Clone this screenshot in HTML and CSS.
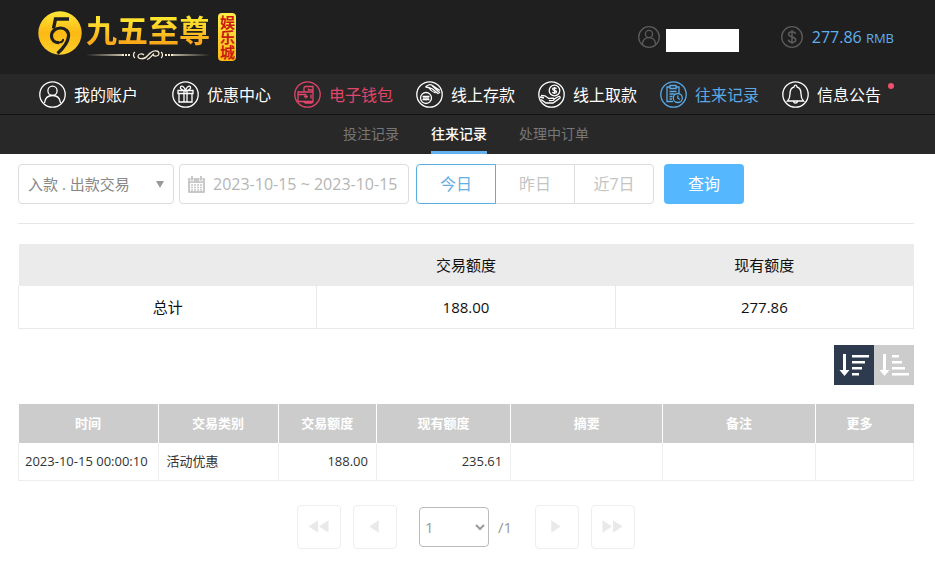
FILE: index.html
```html
<!DOCTYPE html>
<html lang="zh-CN">
<head>
<meta charset="utf-8">
<meta name="viewport" content="width=device-width, initial-scale=1">
<title>往来记录</title>
<link rel="stylesheet" href="styles.css">
</head>
<body>
<header class="top">
  <a class="logo" href="#">
    <svg class="logo-mark" viewBox="0 0 44 44" aria-hidden="true">
      <defs>
        <linearGradient id="gold" x1="0" y1="0" x2="0" y2="1">
          <stop offset="0" stop-color="#ffe838"/><stop offset=".5" stop-color="#fdb913"/><stop offset="1" stop-color="#fccf2c"/>
        </linearGradient>
      </defs>
      <circle cx="22" cy="22" r="21.700" fill="url(#gold)"/>
      <path d="M31 8H17.500l-2 9.500" fill="none" stroke="#1f1f1f" stroke-width="3.400"/>
      <path d="M21 31.500c-4.500.5-7.500-2.500-7.500-6.500 0-4.500 4-8 9-8s8.500 3.500 8 8.500c-.6 6-5 11.500-11 17" fill="none" stroke="#1f1f1f" stroke-width="3.200"/>
      <path d="M20.500 31.500c3 .3 5-1.500 4.500-3.500" fill="none" stroke="#1f1f1f" stroke-width="2"/>
    </svg>
    <span class="logo-words">
      <span class="logo-name">九五至尊</span>
      <svg class="logo-rule" viewBox="0 0 124 12" aria-hidden="true" fill="none" stroke="#f5ecd0">
        <path d="M0 6l36-.8v1.600zM124 6l-38-.8v1.600z" fill="#f5ecd0" stroke="none"/>
        <path d="M36 6h9M79 6h9" stroke-width="2" stroke-dasharray="2 1"/>
        <path d="M49 3c-2 1-2 5 0 6M75 3c2 1 2 5 0 6" stroke-width="1.300"/>
        <path d="M58 6c-2-2-6-1-6 1.200C52 10 57 10.500 60 8l5-4.500c3-2.500 8-2 8 1.200 0 2.300-4 3.300-6 1.300M56 10c4 0 5-3 8-6M61 10.500c3-.5 4-3.500 7-6" stroke-width="1.200"/>
      </svg>
    </span>
    <span class="logo-badge">娱乐城</span>
  </a>
  <div class="account">
    <svg class="round" viewBox="0 0 22 22" aria-hidden="true" fill="none" stroke="#5c5c5c" stroke-width="1.300">
      <circle cx="11" cy="11" r="10.300"/><circle cx="11" cy="8" r="3.600"/><path d="M4.500 18c.3-4 2.800-6.300 6.500-6.300s6.200 2.300 6.500 6.300"/>
    </svg>
    <span class="user-name"></span>
  </div>
  <div class="balance">
    <svg class="round" viewBox="0 0 22 22" aria-hidden="true" fill="none" stroke="#5c5c5c" stroke-width="1.300">
      <circle cx="11" cy="11" r="10.300"/><path d="M14.500 8c-.4-1.600-1.700-2.300-3.500-2.300-2 0-3.400.9-3.400 2.500 0 3.700 7.100 1.700 7.100 5.500 0 1.700-1.600 2.600-3.600 2.600-2.100 0-3.500-.9-3.700-2.600M11 4v14" stroke-width="1.500"/>
    </svg>
    <span class="amount">277.86 <small>RMB</small></span>
  </div>
</header>

<nav class="main-nav">
  <a class="nav-item first" href="#">
    <svg viewBox="0 0 27 27" aria-hidden="true"><circle cx="13.500" cy="13.500" r="12.700"/><circle cx="13.500" cy="9.800" r="4.600"/><path d="M5.500 22c.5-5 3.500-7.500 8-7.500s7.500 2.500 8 7.500"/></svg>
    <span>我的账户</span></a>
  <a class="nav-item" href="#">
    <svg viewBox="0 0 27 27" aria-hidden="true"><circle cx="13.500" cy="13.500" r="12.700"/><path d="M6 9.500h15v3H6zM7 12.500h13v8.500H7zM12 9.500V21M15 9.500V21M13.500 9.500C11 9.500 7.500 8 8.500 6c1.500-2 4 0 5 3.500C14.500 6 17 4 18.500 6c1 2-2.500 3.500-5 3.500z"/></svg>
    <span>优惠中心</span></a>
  <a class="nav-item wallet" href="#">
    <svg viewBox="0 0 27 27" aria-hidden="true"><circle cx="13.500" cy="13.500" r="12.700"/><path d="M10 11V7q0-1.500 1.500-1.500H19v15q0 1.500-1.500 1.500h-6q-1.500 0-1.500-1.500M4 11h15v9.500H4zM4 13.500h8M19 9h-4.500V7.500M12 13.500v4M10 15.500h4M17 13.500v4"/></svg>
    <span>电子钱包</span></a>
  <a class="nav-item" href="#">
    <svg viewBox="0 0 27 27" aria-hidden="true"><circle cx="13.500" cy="13.500" r="12.700"/><circle cx="10" cy="17" r="5.500"/><path d="M6.500 15.500h7M6.500 18.500h7M8 15.500v3M10 15v4.500M12 15.500v3M9.500 6c2-2 5-3 7-1.500l7.500 5M9.500 6l3 .5 4 1.500 6 5M12.500 6.500c2 3 4 4.500 7 5.500M16 4.500l8 7.500"/></svg>
    <span>线上存款</span></a>
  <a class="nav-item" href="#">
    <svg viewBox="0 0 27 27" aria-hidden="true"><circle cx="13.500" cy="13.500" r="12.700"/><circle cx="16.500" cy="9.500" r="5.300"/><path d="M18.500 7.800c-.6-1.200-3.900-1.200-3.900.3 0 1.800 4 1 4 2.800 0 1.600-3.500 1.500-4.200.2M16.500 6v7M3 14.500l4 .3 4 2.700 4-.3c1.500.2 1.500 2-.1 2.200l-4 .2M3 18.500l5 3.500h7l7-5c.7-1.500-.8-2-2-1.200l-4.500 2.700M2 16l4 1"/></svg>
    <span>线上取款</span></a>
  <a class="nav-item current" href="#">
    <svg viewBox="0 0 27 27" aria-hidden="true"><circle cx="13.500" cy="13.500" r="12.700"/><path d="M13 20.500H7V6h3M16 6h3v6M10 4.500h6v3h-6zM9.500 10.500h7M9.500 13h5M9.500 15.500h3M9.500 18h2.500"/><circle cx="17.800" cy="17" r="4.500"/><path d="M17.800 14.500V17l2 1.500"/></svg>
    <span>往来记录</span></a>
  <a class="nav-item notice" href="#">
    <svg viewBox="0 0 27 27" aria-hidden="true"><circle cx="13.500" cy="13.500" r="12.700"/><path d="M5.500 20c2-2 2.500-4 2.500-7 0-4 2-6.500 4-7 .3-2.500 2.700-2.500 3 0 2 .5 4 3 4 7 0 3 .5 5 2.500 7zM11.500 20c.2 2.700 3.800 2.700 4 0"/></svg>
    <span>信息公告</span></a>
</nav>

<nav class="sub-nav">
  <a href="#">投注记录</a>
  <a class="active" href="#">往来记录</a>
  <a href="#">处理中订单</a>
</nav>

<main class="content">
  <form class="filters">
    <div class="type-field">
      <select class="type-select" aria-label="交易类型"><option>入款 . 出款交易</option></select>
      <svg class="type-arrow" viewBox="0 0 8 7" aria-hidden="true"><path d="M0 0h8L4 7z" fill="#999"/></svg>
    </div>
    <label class="date-field">
      <svg viewBox="0 0 17 17" aria-hidden="true"><path d="M1 2h2V0h2v2h7V0h2v2h2q1 0 1 1v13q0 1-1 1H1q-1 0-1-1V3q0-1 1-1z" fill="#c8c8c8"/><path d="M2 7h13v8H2z" fill="#fff"/><path d="M3 9h11M3 11.500h11M3 14h11" stroke="#c8c8c8" stroke-width="1.500" stroke-dasharray="2 1"/><path d="M2.500 2.500V5h3V2.500M11.500 2.500V5h3V2.500" fill="none" stroke="#fff" stroke-width=".7"/></svg>
      <input type="text" value="2023-10-15 ~ 2023-10-15" aria-label="日期范围">
    </label>
    <div class="quick">
      <button type="button" class="selected">今日</button>
      <button type="button">昨日</button>
      <button type="button">近7日</button>
    </div>
    <button type="button" class="query">查询</button>
  </form>

  <table class="summary">
    <thead><tr><th></th><th>交易额度</th><th>现有额度</th></tr></thead>
    <tbody><tr><td>总计</td><td>188.00</td><td>277.86</td></tr></tbody>
  </table>

  <div class="sort">
    <button type="button" class="on" aria-label="降序">
      <svg viewBox="0 0 40 40" aria-hidden="true"><path d="M9 9h3v16h3.500l-5 6-5-6H9zM18 10h17v2.500H18zM18 16h13v2.500H18zM18 22h10v2.500H18zM18 28h7v2.500h-7z" fill="#fff"/></svg>
    </button>
    <button type="button" aria-label="升序">
      <svg viewBox="0 0 40 40" aria-hidden="true"><path d="M9 9h3v16h3.500l-5 6-5-6H9zM18 10h7v2.500h-7zM18 16h10v2.500H18zM18 22h13v2.500H18zM18 28h17v2.500H18z" fill="#fff"/></svg>
    </button>
  </div>

  <table class="records">
    <colgroup><col class="c-time"><col class="c-type"><col class="c-amount"><col class="c-balance"><col class="c-note"><col class="c-note"><col class="c-more"></colgroup>
    <thead><tr><th>时间</th><th>交易类别</th><th>交易额度</th><th>现有额度</th><th>摘要</th><th>备注</th><th class="more">更多</th></tr></thead>
    <tbody><tr><td class="time">2023-10-15 00:00:10</td><td>活动优惠</td><td class="num">188.00</td><td class="num">235.61</td><td></td><td></td><td></td></tr></tbody>
  </table>

  <div class="pager">
    <button type="button" disabled aria-label="首页"><svg viewBox="0 0 44 44" aria-hidden="true"><path d="M21 15v13l-10-6.500zM32 15v13l-10-6.500z"/></svg></button>
    <button type="button" disabled aria-label="上一页"><svg viewBox="0 0 44 44" aria-hidden="true"><path d="M26 15v13l-10-6.500z"/></svg></button>
    <div class="page-pick">
      <select aria-label="页码"><option>1</option></select>
      <span>/1</span>
    </div>
    <button type="button" disabled aria-label="下一页"><svg viewBox="0 0 44 44" aria-hidden="true"><path d="M16 15v13l10-6.500z"/></svg></button>
    <button type="button" disabled aria-label="末页"><svg viewBox="0 0 44 44" aria-hidden="true"><path d="M11 15v13l10-6.500zM22 15v13l10-6.500z"/></svg></button>
  </div>
</main>
</body>
</html>
```
FILE: styles.css
```css
* { box-sizing: border-box; }

body {
  margin: 0;
  background: #fff;
  color: #111;
  font-family: "Open Sans", "Noto Sans CJK SC", sans-serif;
  font-size: 15px;
  line-height: 20px;
}

a { color: inherit; text-decoration: none; }
button, select, input { font: inherit; margin: 0; }
svg { display: block; flex: none; }

.top {
  display: flex;
  align-items: center;
  height: 74px;
  padding: 0 41px 0 38px;
  background: #1f1f1f;
}

.logo { display: flex; align-items: center; margin-right: auto; }
.logo-mark { width: 44px; height: 44px; margin: 0 4px 8px 0; }
.logo-words { display: flex; flex-direction: column; gap: 2px; }
.logo-name {
  font-size: 31px;
  line-height: 34px;
  font-weight: 700;
  background: linear-gradient(#ffe42e 20%, #fba91a 85%);
  background-clip: text;
  -webkit-background-clip: text;
  color: transparent;
}
.logo-rule { width: 124px; height: 12px; }
.logo-badge {
  writing-mode: vertical-rl;
  width: 18px;
  height: 48px;
  margin-left: 8px;
  border-radius: 4px;
  background: linear-gradient(#ffee48, #fdb716);
  color: #c81c10;
  font-size: 15px;
  line-height: 18px;
  font-weight: 700;
  text-align: center;
}

.account, .balance { display: flex; align-items: center; }
.account { gap: 6px; }
.balance { gap: 9px; margin-left: 42px; }
.round { width: 22px; height: 22px; }
.user-name { width: 73px; height: 23px; margin-top: 6px; background: #fff; }
.amount { color: #5fb0ee; font-size: 16px; }
.amount small { font-size: 13px; }

.main-nav {
  display: flex;
  gap: 23px;
  height: 40px;
  padding: 0 39px;
  background: #282828;
  color: #fff;
}
.nav-item { display: flex; align-items: center; gap: 8px; font-size: 16px; white-space: nowrap; }
.nav-item svg { width: 27px; height: 27px; fill: none; stroke: currentColor; stroke-width: 1.3; }
.nav-item span { padding-top: 2px; }
.first { margin-right: 11px; }
.wallet { color: #e0456a; }
.current { color: #58a9e6; }
.notice { position: relative; }
.notice::after {
  content: "";
  position: absolute;
  top: 9px;
  right: -13px;
  width: 6px;
  height: 6px;
  border-radius: 50%;
  background: #f0506e;
}

.sub-nav {
  display: flex;
  justify-content: center;
  gap: 32px;
  height: 40px;
  padding: 0 21px 0 18px;
  border-top: 1px solid #111;
  background: #282828;
  color: #777;
  font-size: 14px;
  line-height: 38px;
}
.sub-nav .active { color: #fff; font-weight: 500; border-bottom: 3px solid #62b0ee; }

.content { padding: 10px 21px 0 18px; }

.filters {
  display: flex;
  height: 60px;
  padding-bottom: 19px;
  border-bottom: 1px solid #e6e6e6;
}
.type-field { position: relative; display: flex; width: 156px; margin-right: 5px; }
.type-select {
  appearance: none;
  width: 100%;
  padding: 0 24px 0 9px;
  border: 1px solid #ddd;
  border-radius: 4px;
  background: #fff;
  color: #888;
}
.type-arrow { position: absolute; right: 10px; top: 17px; width: 8px; height: 7px; }
.date-field {
  display: flex;
  align-items: center;
  gap: 8px;
  width: 230px;
  padding: 0 0 0 8px;
  margin-right: 7px;
  border: 1px solid #ddd;
  border-radius: 4px;
}
.date-field svg { width: 17px; height: 17px; }
.date-field input {
  flex: 1;
  min-width: 0;
  padding: 0;
  border: 0;
  outline: 0;
  background: none;
  color: #b5b5b5;
  font-size: 16px;
}
.quick { display: flex; margin-right: 10px; }
.quick button {
  width: 80px;
  margin-left: -1px;
  padding: 0;
  border: 1px solid #ddd;
  background: #fff;
  color: #c4c4c4;
  font-size: 16px;
}
.quick button:first-child { margin-left: 0; border-radius: 4px 0 0 4px; }
.quick button:last-child { border-radius: 0 4px 4px 0; }
.quick .selected { z-index: 1; border-color: #5aaee0; color: #66afe0; }
.query { width: 80px; border: 0; border-radius: 4px; background: #55b8ff; color: #fff; font-size: 16px; }

table { width: 100%; border-collapse: collapse; table-layout: fixed; }

.summary { margin-top: 20px; }
.summary th { height: 42px; padding: 0; background: #ebebeb; font-weight: 400; }
.summary td { height: 42px; padding: 0; border: 1px solid #e9e9e9; border-top: 0; text-align: center; }

.sort { display: flex; justify-content: flex-end; margin: 16px 0 19px; }
.sort button { width: 40px; height: 40px; padding: 0; border: 0; background: #ccc; }
.sort .on { background: #2e3a4d; }

.records { font-size: 13px; }
.c-time { width: 15.6%; }
.c-type { width: 13.4%; }
.c-amount { width: 11%; }
.c-balance { width: 15%; }
.c-note { width: 17%; }
.c-more { width: 11%; }
.records th { height: 39px; padding: 0; background: #ccc; color: #fff; font-weight: 700; }
.records th + th { border-left: 1px solid #fff; }
.records .more { padding-right: 10px; }
.records td { height: 38px; padding: 0 8px; border: 1px solid #eee; border-top: 0; color: #333; }
.records .time { padding: 0 6px; white-space: nowrap; }
.records .num { text-align: right; }

.pager { display: flex; justify-content: center; align-items: center; gap: 12px; margin: 24px 0 13px; }
.pager button { width: 44px; height: 44px; padding: 0; border: 1px solid #eee; border-radius: 4px; background: #fff; }
.pager button svg { width: 42px; height: 42px; fill: #e9e9e9; }
.page-pick { display: flex; align-items: center; gap: 9px; margin: 0 11px 0 10px; color: #999; }
.page-pick select {
  width: 70px;
  height: 40px;
  padding: 0 1px;
  border: 1px solid #bbb;
  border-radius: 4px;
  background: #fff;
  color: #999;
}
```
